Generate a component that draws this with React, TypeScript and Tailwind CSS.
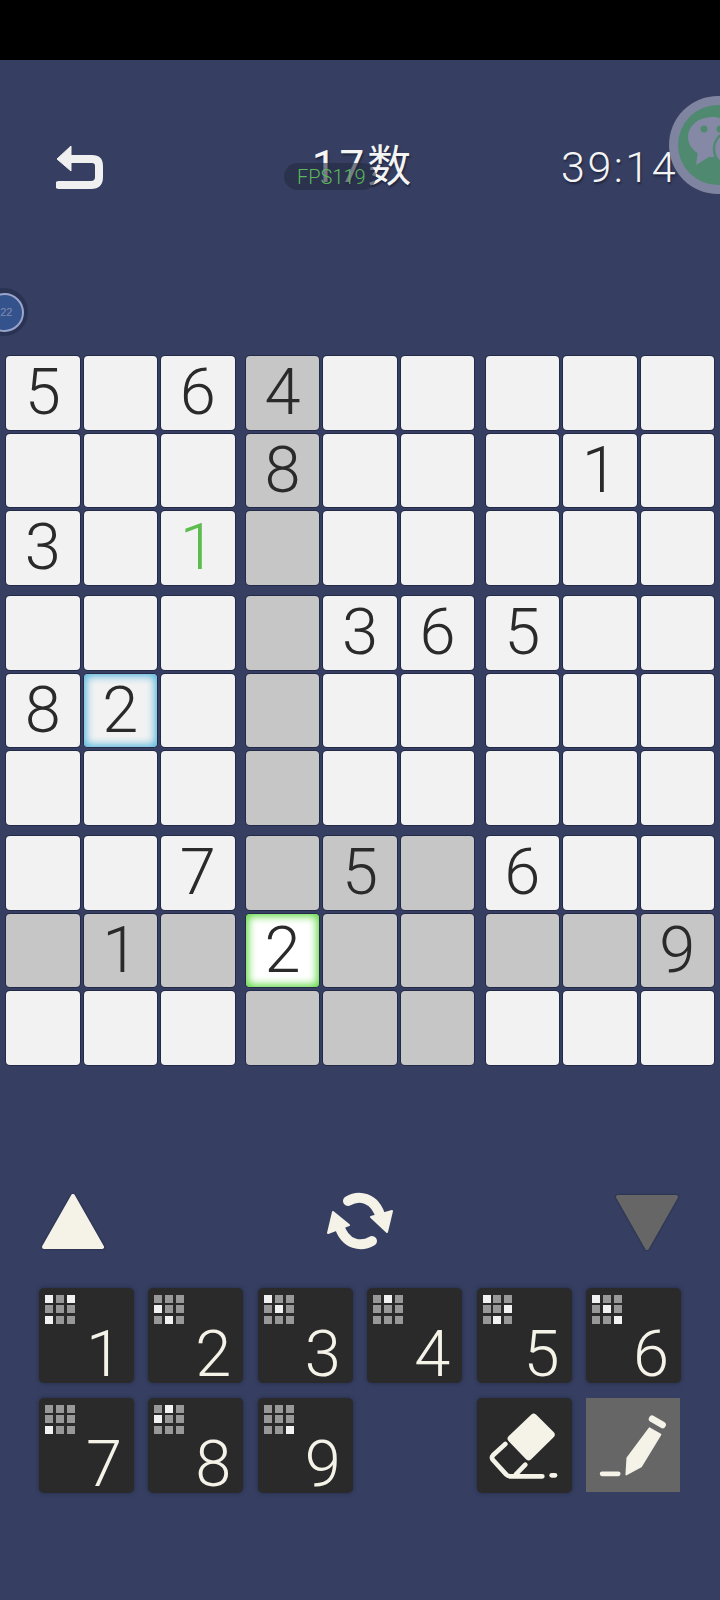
import React from "react";

const digitFont = "[font-family:Roboto,'Liberation_Sans',sans-serif] font-light";

type Mark = "" | "blue" | "green";

const puzzle: string[][] = [
  ["5", "", "6", "4", "", "", "", "", ""],
  ["", "", "", "8", "", "", "", "1", ""],
  ["3", "", "1", "", "", "", "", "", ""],
  ["", "", "", "", "3", "6", "5", "", ""],
  ["8", "2", "", "", "", "", "", "", ""],
  ["", "", "", "", "", "", "", "", ""],
  ["", "", "7", "", "5", "", "6", "", ""],
  ["", "1", "", "2", "", "", "", "", "9"],
  ["", "", "", "", "", "", "", "", ""],
];

const keypad = [
  { n: "1", lit: [0, 2, 6] },
  { n: "2", lit: [3, 7] },
  { n: "3", lit: [0, 4] },
  { n: "4", lit: [1] },
  { n: "5", lit: [0, 5, 7] },
  { n: "6", lit: [0, 4, 8] },
  { n: "7", lit: [6] },
  { n: "8", lit: [1, 3] },
  { n: "9", lit: [8] },
];

const Cell = ({ row, col }: { row: number; col: number }) => {
  const value = puzzle[row][col];
  const mark: Mark = row === 4 && col === 1 ? "blue" : row === 7 && col === 3 ? "green" : "";
  const gray = col === 3 || row === 7 || (row >= 6 && col >= 3 && col <= 5);
  const isGreenDigit = row === 2 && col === 2;

  let look = gray ? "bg-[#c6c6c6]" : "bg-[#f2f2f2]";
  if (mark === "green") look = "bg-white shadow-[inset_0_0_9px_2px_#55d636,0_0_0_1px_#232a47]";
  else if (mark === "blue") look = "bg-[#f2f2f2] shadow-[inset_0_0_9px_2px_#4eb3dc,0_0_0_1px_#232a47]";
  else look += " shadow-[0_0_0_1px_#232a47]";

  return (
    <div className={`flex h-[73.5px] w-[73.5px] items-center justify-center rounded-[4px] ${look}`}>
      <span className={`${digitFont} text-[65px] leading-none ${isGreenDigit ? "text-[#5cbc4e]" : "text-[#2a2a2a]"}`}>
        {value}
      </span>
    </div>
  );
};

const Board = () => (
  <div className="ml-[6px] grid w-[708px] grid-cols-3 gap-x-[11.25px] gap-y-[11.5px]">
    {[0, 3, 6].map((r) =>
      [0, 3, 6].map((c) => (
        <div key={`${r}-${c}`} className="grid grid-cols-3 gap-x-[4px] gap-y-[4px]">
          {[0, 1, 2].map((i) =>
            [0, 1, 2].map((j) => <Cell key={`${i}-${j}`} row={r + i} col={c + j} />)
          )}
        </div>
      ))
    )}
  </div>
);

const NumKey = ({ n, lit }: { n: string; lit: number[] }) => (
  <button className="flex h-[95px] w-[95px] flex-col rounded-[5px] bg-[#2a2a2a] pl-[6px] pt-[7px] shadow-[0_0_4px_#232a47]">
    <div className="grid w-[30px] grid-cols-3 gap-[2.7px]">
      {[0, 1, 2, 3, 4, 5, 6, 7, 8].map((i) => (
        <div key={i} className={`h-[8px] w-[8px] ${lit.includes(i) ? "bg-[#f2f2f2]" : "bg-[#989898]"}`} />
      ))}
    </div>
    <span className={`${digitFont} -mt-[3px] ml-auto w-[60px] text-center text-[65px] leading-[66px] text-[#f5f2e8]`}>
      {n}
    </span>
  </button>
);

const EraserIcon = () => (
  <svg viewBox="0 0 285 285" className="h-full w-full" fill="none" stroke="#f5f2e8" strokeLinecap="round" strokeLinejoin="round">
    <path d="M170 58 L222 110 L155 176 L103 122 Z" fill="#f5f2e8" strokeWidth="22" />
    <path d="M85 138 L48 172 Q42 178 48 186 L88 230 Q92 235 100 235 L196 235" strokeWidth="14" />
    <path d="M145 200 L116 230" strokeWidth="14" />
    <path d="M224 232 L234 232" strokeWidth="14" />
  </svg>
);

const PencilIcon = () => (
  <svg viewBox="0 0 280 280" className="h-full w-full" fill="#f5f2e8" stroke="#f5f2e8" strokeLinecap="round" strokeLinejoin="round">
    <path d="M197 62 L228 80" strokeWidth="20" fill="none" />
    <path d="M189 90 L222 109 L164 204 L120 228 L123 179 Z" strokeWidth="5" />
    <path d="M48 226 L96 226" strokeWidth="14" fill="none" />
  </svg>
);

const RefreshIcon = () => (
  <svg viewBox="15 21 70 61" className="h-[61px] w-[70px]" fill="#f5f2e8" stroke="#f5f2e8" strokeLinejoin="round">
    <path d="M38 31 C48 25 65 26 71 48" fill="none" strokeWidth="10" strokeLinecap="round" />
    <path d="M61 47 L82 41 L77 62 Z" strokeWidth="2" />
    <path d="M62 71 C52 77 35 76 29 55" fill="none" strokeWidth="10" strokeLinecap="round" />
    <path d="M18 63 L23 42 L39 55 Z" strokeWidth="2" />
  </svg>
);

const BackIcon = () => (
  <svg viewBox="0 0 48 46" className="h-[46px] w-[48px]" fill="none" stroke="#f0f0f0">
    <path d="M12 15 L36 15 Q43 15 43 22 L43 33 Q43 41 35 41 L3 41" strokeWidth="8" strokeLinecap="round" />
    <path d="M15 2 L15 27 L1 15 Z" fill="#f0f0f0" strokeWidth="1" strokeLinejoin="round" />
  </svg>
);

export default function App() {
  return (
    <div className="relative h-[1600px] w-[720px] overflow-hidden bg-[#363f61]">
      <div className="h-[60px] bg-black" />

      {/* header */}
      <div className="mt-[84px] grid h-[46px] grid-cols-[1fr_auto_1fr] items-center px-[43px] text-[#f4f4f4]">
        <div className="ml-[13px]">
          <BackIcon />
        </div>
        <div className="ml-[6px] text-[44px] leading-none tracking-[3px] font-normal [font-family:Roboto,'Noto_Sans_CJK_SC',sans-serif] [text-shadow:1px_2px_2px_#1f2540]">
          17数
        </div>
        <div className={`${digitFont} -mr-[1px] justify-self-end text-[43px] leading-none tracking-[2.5px] [text-shadow:1px_2px_2px_#1f2540]`}>
          39:14
        </div>
      </div>

      <div className="mt-[166px]">
        <Board />
      </div>

      {/* arrows */}
      <div className="mt-[128px] flex h-[58px] items-center justify-between px-[41px]">
        <svg viewBox="0 0 64 58" className="h-[58px] w-[64px] drop-shadow-[0_0_1px_#1f2540]">
          <path d="M32 3 L61 54 L3 54 Z" fill="#f5f2e8" stroke="#f5f2e8" strokeWidth="4" strokeLinejoin="round" />
        </svg>
        <RefreshIcon />
        <svg viewBox="0 0 64 58" className="h-[58px] w-[64px] drop-shadow-[0_0_1px_#1f2540]">
          <path d="M3 4 L61 4 L32 55 Z" fill="#666666" stroke="#666666" strokeWidth="4" strokeLinejoin="round" />
        </svg>
      </div>

      {/* keypad */}
      <div className="ml-[39px] mt-[37px] grid w-[642px] grid-cols-6 gap-x-[14.4px] gap-y-[15px]">
        {keypad.slice(0, 6).map((k) => (
          <NumKey key={k.n} n={k.n} lit={k.lit} />
        ))}
        {keypad.slice(6).map((k) => (
          <NumKey key={k.n} n={k.n} lit={k.lit} />
        ))}
        <div />
        <button className="h-[95px] w-[95px] rounded-[5px] bg-[#2a2a2a] shadow-[0_0_4px_#232a47]">
          <EraserIcon />
        </button>
        <button className="h-[94px] w-[94px] bg-[#666666]">
          <PencilIcon />
        </button>
      </div>

      {/* overlays */}
      <div className="absolute left-[284px] top-[163px] flex h-[27px] w-[92px] items-center rounded-full bg-[#23293f]/60 pl-[13px] text-[20px] font-light leading-none text-[#5cb85c] [font-family:Roboto,sans-serif]">
        FPS119
      </div>

      <div className="absolute left-[669px] top-[96px] flex h-[98px] w-[98px] items-center justify-center rounded-full bg-[#7f84a0]">
        <div className="relative h-[80px] w-[80px] overflow-hidden rounded-full bg-[#4f8a70]">
          <svg viewBox="0 0 80 80" className="h-full w-full">
            <ellipse cx="34" cy="32" rx="24" ry="20" fill="#8589a6" />
            <path d="M20 46 L18 60 L34 50 Z" fill="#8589a6" />
            <circle cx="26" cy="24" r="3.5" fill="#4f8a70" />
            <circle cx="42" cy="24" r="3.5" fill="#4f8a70" />
            <circle cx="54" cy="44" r="18" fill="#8589a6" stroke="#4f8a70" strokeWidth="2.5" />
          </svg>
        </div>
      </div>

      <div className="absolute -left-[20px] top-[288px] flex h-[48px] w-[48px] items-center justify-center rounded-full bg-[#2b3354]">
        <div className="flex h-[39px] w-[39px] items-center justify-end rounded-full border-[2.5px] border-[#9aa5cc] bg-[#34538c] pr-[9px] text-[11px] text-[#7f8bb0] [font-family:'Liberation_Sans',sans-serif]">
          22
        </div>
      </div>
    </div>
  );
}
